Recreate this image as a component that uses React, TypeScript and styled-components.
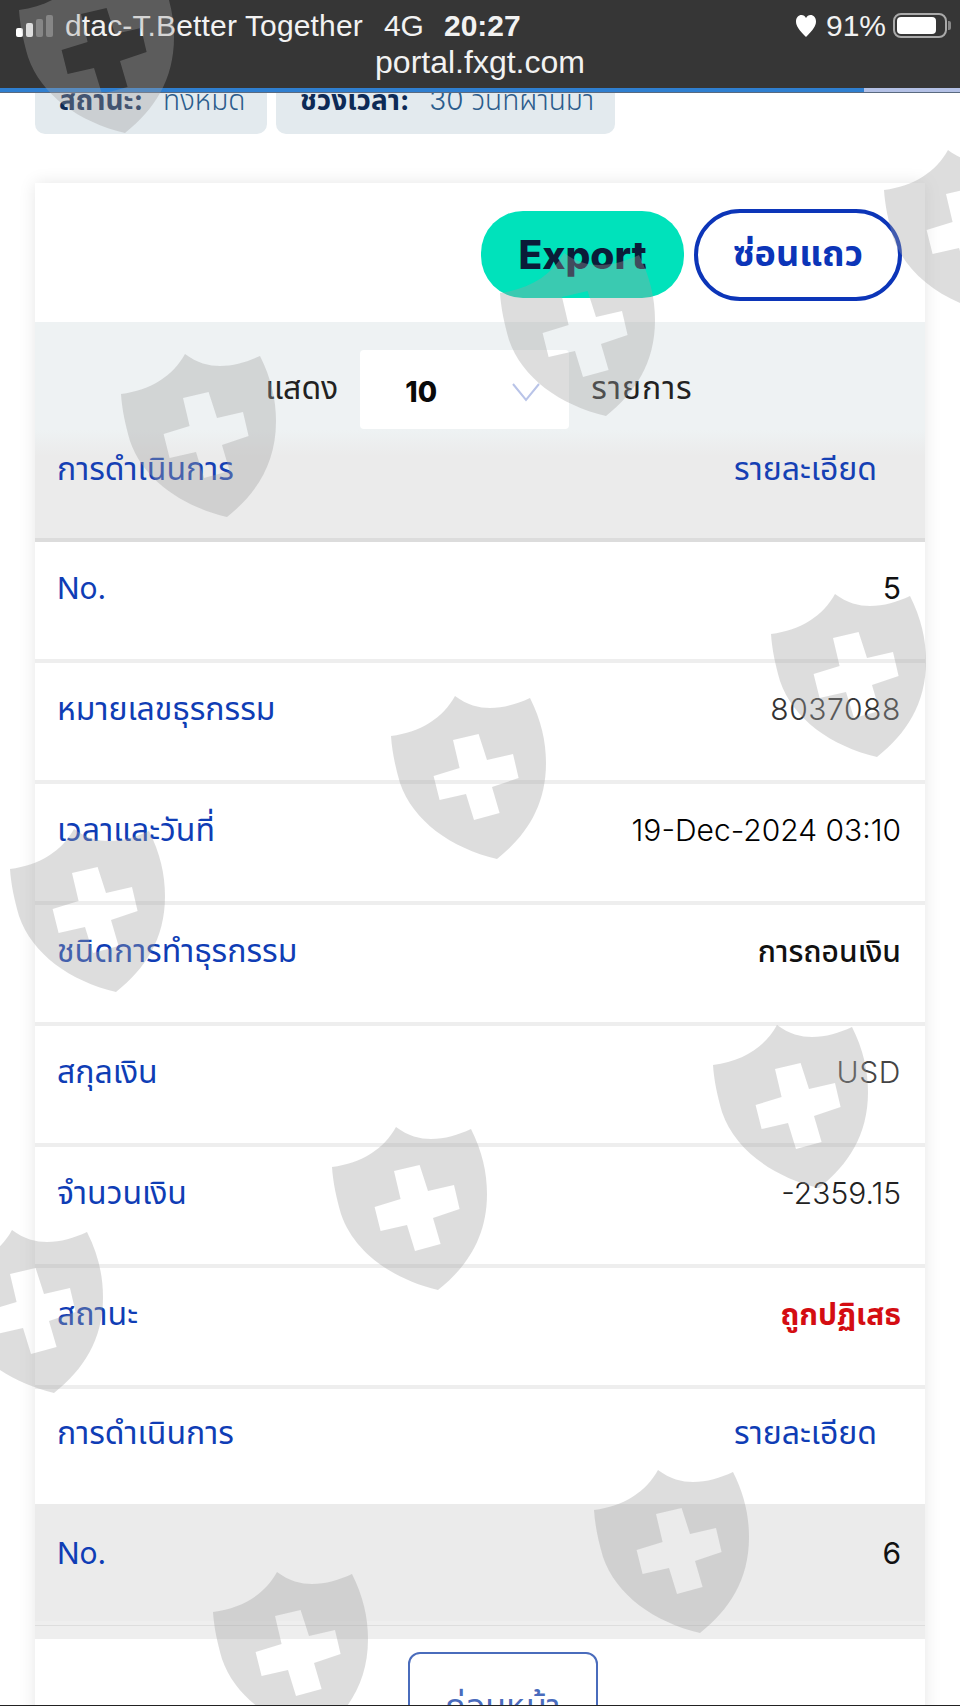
import React from "react";
import styled, { createGlobalStyle } from "styled-components";

const Global = createGlobalStyle`
  html, body { margin: 0; padding: 0; background: #fff; }
  * { box-sizing: border-box; }
`;

const FONT = `Inter, "Noto Sans", "Noto Sans Thai", "DejaVu Sans", sans-serif`;

const Page = styled.div`
  position: relative;
  width: 960px;
  height: 1706px;
  overflow: hidden;
  background: #fff;
  font-family: ${FONT};
  border-bottom: 1px solid #222;
`;

const StatusBar = styled.header`
  height: 88px;
  background: #363636;
  color: #f2f2f2;
  padding: 9px 10px 0 16px;
  font-family: "Liberation Sans", Arial, sans-serif;
`;

const StatusLine = styled.div`
  display: flex;
  align-items: center;
  height: 33px;
  font-size: 30px;
  white-space: nowrap;
`;

const Signal = styled.div`
  display: flex;
  align-items: flex-end;
  gap: 3px;
  height: 22px;
  margin-right: 12px;
`;

const SignalBar = styled.span<{ $h: number; $on: boolean }>`
  display: block;
  width: 7px;
  height: ${(p) => p.$h}px;
  border-radius: 2px;
  background: ${(p) => (p.$on ? "#fff" : "#777")};
`;

const Carrier = styled.span`
  margin-right: 21px;
  letter-spacing: 0.15px;
`;

const Network = styled.span`
  margin-right: 20px;
`;

const Clock = styled.strong`
  font-weight: 700;
`;

const StatusRight = styled.div`
  margin-left: auto;
  display: flex;
  align-items: center;
  gap: 9px;
`;

const Heart = styled.svg`
  width: 22px;
  height: 24px;
`;

const Battery = styled.div`
  position: relative;
  width: 54px;
  height: 25px;
  margin-left: -2px;
  margin-right: 3px;
  border: 2px solid #aaa;
  border-radius: 8px;
  padding: 2px;
  &::before {
    content: "";
    display: block;
    width: 85%;
    height: 100%;
    background: #fff;
    border-radius: 4px;
  }
  &::after {
    content: "";
    position: absolute;
    right: -6px;
    top: 6px;
    width: 3px;
    height: 9px;
    background: #888;
    border-radius: 0 2px 2px 0;
  }
`;

const Url = styled.div`
  text-align: center;
  font-size: 32px;
  line-height: 36px;
  margin-top: 2px;
  margin-left: -6px;
`;

const Progress = styled.div`
  height: 5px;
  background: #b4c1e6;
  border-bottom: 1px solid #5a6a80;
`;

const ProgressFill = styled.div`
  width: 864px;
  height: 100%;
  background: #2f7fd0;
`;

const ChipStrip = styled.div`
  height: 41px;
  overflow: hidden;
  display: flex;
  align-items: flex-end;
  gap: 9px;
  padding-left: 35px;
`;

const Chip = styled.div<{ $w: number }>`
  flex: none;
  width: ${(p) => p.$w}px;
  height: 70px;
  padding: 18px 0 0 24px;
  background: #e3eaee;
  border-radius: 0 0 10px 10px;
  display: flex;
  gap: 20px;
  align-items: flex-start;
  font-size: 28px;
  line-height: 36px;
  white-space: nowrap;
`;

const ChipLabel = styled.b`
  color: #0d2a56;
  font-weight: 700;
`;

const ChipValue = styled.span`
  color: #2b5c8c;
  font-weight: 300;
`;

const Card = styled.section`
  margin: 49px 35px 0;
  width: 890px;
  background: #fff;
  box-shadow: 0 0 16px rgba(0, 0, 0, 0.1);
`;

const Toolbar = styled.div`
  height: 139px;
  display: flex;
  justify-content: flex-end;
  align-items: center;
  gap: 10px;
  padding: 4px 23px 0 0;
`;

const ExportButton = styled.button`
  width: 203px;
  height: 87px;
  border: 0;
  border-radius: 42px;
  background: #00e2bb;
  color: #0b1c38;
  font: 800 39px ${FONT};
  padding: 0;
`;

const HideButton = styled.button`
  width: 208px;
  height: 92px;
  border: 4px solid #0c35b8;
  border-radius: 46px;
  background: #fff;
  color: #0c35b8;
  font: 700 36px ${FONT};
  padding: 0;
`;

const FilterPanel = styled.div`
  height: 220px;
  background: linear-gradient(#eef2f3 0, #eef2f3 50%, #ebebeb 62%, #ebebeb 100%);
  border-bottom: 4px solid #dcdcdc;
`;

const LengthRow = styled.div`
  display: flex;
  justify-content: center;
  align-items: flex-start;
  gap: 22px;
  padding: 28px 2px 0 0;
  height: 129px;
  color: #222;
  font-size: 32px;
  line-height: 76px;
`;

const LengthWord = styled.span<{ $wide?: boolean }>`
  letter-spacing: ${(p) => (p.$wide ? 1 : 0)}px;
`;

const Select = styled.div`
  width: 209px;
  height: 79px;
  background: #fff;
  border-radius: 4px;
  display: flex;
  align-items: flex-start;
  justify-content: space-between;
  padding: 4px 28px 0 45px;
  color: #0a0a0a;
  font-weight: 800;
  font-size: 28px;
`;

const Chevron = styled.svg`
  width: 30px;
  height: 20px;
  margin-top: 28px;
`;

const ColumnHead = styled.div`
  display: flex;
  justify-content: space-between;
  padding: 0 48px 0 22px;
  font-size: 32px;
  line-height: 36px;
  color: #1540b4;
`;

const Row = styled.div<{ $shade?: boolean }>`
  height: 121px;
  padding: ${(p) => (p.$shade ? 31 : 28)}px 24px 0 22px;
  display: flex;
  justify-content: space-between;
  line-height: 36px;
  background: ${(p) => (p.$shade ? "#ebebeb" : "#fff")};
  border-bottom: 4px solid #eeeeee;
`;

const Label = styled.span<{ $latin?: boolean }>`
  color: #0f3db5;
  font-size: ${(p) => (p.$latin ? 30 : 32)}px;
`;

const Value = styled.span<{ $tone?: string; $weight?: number; $spaced?: boolean }>`
  color: ${(p) => p.$tone ?? "#111"};
  font-weight: ${(p) => p.$weight ?? 400};
  font-size: 30px;
  letter-spacing: ${(p) => (p.$spaced ? 0.6 : 0)}px;
`;

const ActionRow = styled.div`
  height: 115px;
  padding: 26px 48px 0 22px;
  display: flex;
  justify-content: space-between;
  font-size: 32px;
  line-height: 36px;
  color: #0f3db5;
`;

const Divider = styled.div`
  height: 14px;
  background: #eeeeee;
  border-top: 1px solid #ddd;
`;

const Pager = styled.div`
  display: flex;
  justify-content: flex-start;
  padding: 13px 0 0 373px;
  height: 120px;
`;

const PrevButton = styled.button`
  width: 190px;
  height: 90px;
  background: #fff;
  border: 2px solid #4a6cbc;
  border-radius: 12px;
  color: #4a6cbc;
  font: 400 34px ${FONT};
  padding: 20px 0 0;
  align-self: flex-start;
`;

const Watermark = styled.svg<{ $x: number; $y: number }>`
  position: absolute;
  left: ${(p) => p.$x}px;
  top: ${(p) => p.$y}px;
  width: 156px;
  height: 164px;
  pointer-events: none;
`;

const shields: [number, number][] = [
  [19, -30],
  [500, 253],
  [121, 354],
  [884, 150],
  [771, 594],
  [391, 696],
  [10, 829],
  [713, 1025],
  [332, 1127],
  [-52, 1230],
  [594, 1470],
  [213, 1572],
];

const SHIELD =
  "M0 40C30 36 52 22 64 0C76 9 88 12 99 12C113 12 126 8 139 2C150 24 155 45 155 67C155 110 135 140 106 163C60 152 22 125 9 87C4 70 1 55 0 40Z" +
  "M62 44L87.6 38L96 64L122 58L127.6 82L101 91L108.6 117L83 124L75 98L48.6 104L42.6 80L68.6 72Z";

const rows: { label: string; latin?: boolean; value: string; tone?: string; weight?: number; spaced?: boolean }[] = [
  { label: "No.", latin: true, value: "5" },
  { label: "หมายเลขธุรกรรม", value: "8037088", tone: "#333", weight: 300, spaced: true },
  { label: "เวลาและวันที่", value: "19-Dec-2024 03:10", weight: 300, tone: "#000" },
  { label: "ชนิดการทำธุรกรรม", value: "การถอนเงิน", weight: 500 },
  { label: "สกุลเงิน", value: "USD", tone: "#444", weight: 300, spaced: true },
  { label: "จำนวนเงิน", value: "-2359.15", tone: "#222", weight: 300 },
  { label: "สถานะ", value: "ถูกปฏิเสธ", tone: "#d40d12", weight: 700 },
];

export default function App() {
  return (
    <>
      <Global />
      <Page>
        <StatusBar>
          <StatusLine>
            <Signal>
              <SignalBar $h={9} $on />
              <SignalBar $h={14} $on />
              <SignalBar $h={18} $on={false} />
              <SignalBar $h={22} $on={false} />
            </Signal>
            <Carrier>dtac-T.Better Together</Carrier>
            <Network>4G</Network>
            <Clock>20:27</Clock>
            <StatusRight>
              <Heart viewBox="0 0 22 24" aria-hidden="true">
                <path d="M11 23C4 16 1 12 1 7.500C1 3.500 3.500 1 6.500 1C8.500 1 10 2 11 4C12 2 13.500 1 15.500 1C18.500 1 21 3.500 21 7.500C21 12 18 16 11 23Z" fill="#fff" />
              </Heart>
              <span>91%</span>
              <Battery />
            </StatusRight>
          </StatusLine>
          <Url>portal.fxgt.com</Url>
        </StatusBar>
        <Progress>
          <ProgressFill />
        </Progress>
        <ChipStrip>
          <Chip $w={232}>
            <ChipLabel>สถานะ:</ChipLabel>
            <ChipValue>ทั้งหมด</ChipValue>
          </Chip>
          <Chip $w={339}>
            <ChipLabel>ช่วงเวลา:</ChipLabel>
            <ChipValue>30 วันที่ผ่านมา</ChipValue>
          </Chip>
        </ChipStrip>
        <Card>
          <Toolbar>
            <ExportButton>Export</ExportButton>
            <HideButton>ซ่อนแถว</HideButton>
          </Toolbar>
          <FilterPanel>
            <LengthRow>
              <LengthWord>แสดง</LengthWord>
              <Select>
                10
                <Chevron viewBox="0 0 30 20" aria-hidden="true">
                  <path d="M2 2L15 18L28 2" fill="none" stroke="#b9c4e8" strokeWidth="2" />
                </Chevron>
              </Select>
              <LengthWord $wide>รายการ</LengthWord>
            </LengthRow>
            <ColumnHead>
              <span>การดำเนินการ</span>
              <span>รายละเอียด</span>
            </ColumnHead>
          </FilterPanel>
          {rows.map((r) => (
            <Row key={r.label}>
              <Label $latin={r.latin}>{r.label}</Label>
              <Value $tone={r.tone} $weight={r.weight} $spaced={r.spaced}>
                {r.value}
              </Value>
            </Row>
          ))}
          <ActionRow>
            <span>การดำเนินการ</span>
            <span>รายละเอียด</span>
          </ActionRow>
          <Row $shade>
            <Label $latin>No.</Label>
            <Value>6</Value>
          </Row>
          <Divider />
          <Pager>
            <PrevButton>ก่อนหน้า</PrevButton>
          </Pager>
        </Card>
        {shields.map(([x, y]) => (
          <Watermark key={`${x}-${y}`} $x={x} $y={y} viewBox="0 0 156 164" aria-hidden="true">
            <path d={SHIELD} fill="rgb(160,160,160)" fillOpacity="0.36" fillRule="evenodd" />
          </Watermark>
        ))}
      </Page>
    </>
  );
}
